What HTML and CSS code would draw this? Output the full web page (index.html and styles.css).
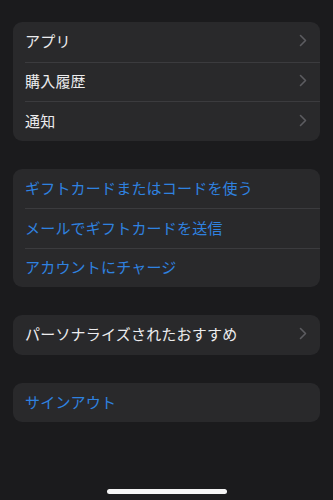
FILE: index.html
```html
<!DOCTYPE html>
<html lang="ja">
<head>
<meta charset="utf-8">
<link rel="stylesheet" href="styles.css">
</head>
<body>
<main class="page">
  <section class="card">
    <div class="row"><span class="label">アプリ</span><svg class="chev" viewBox="0 0 8 13"><path d="M1.5 1.5 L6.5 6.5 L1.5 11.5"/></svg></div>
    <div class="row"><span class="label">購入履歴</span><svg class="chev" viewBox="0 0 8 13"><path d="M1.5 1.5 L6.5 6.5 L1.5 11.5"/></svg></div>
    <div class="row"><span class="label">通知</span><svg class="chev" viewBox="0 0 8 13"><path d="M1.5 1.5 L6.5 6.5 L1.5 11.5"/></svg></div>
  </section>
  <section class="card">
    <div class="row"><span class="label link">ギフトカードまたはコードを使う</span></div>
    <div class="row"><span class="label link">メールでギフトカードを送信</span></div>
    <div class="row"><span class="label link">アカウントにチャージ</span></div>
  </section>
  <section class="card">
    <div class="row"><span class="label">パーソナライズされたおすすめ</span><svg class="chev" viewBox="0 0 8 13"><path d="M1.5 1.5 L6.5 6.5 L1.5 11.5"/></svg></div>
  </section>
  <section class="card">
    <div class="row"><span class="label link">サインアウト</span></div>
  </section>
</main>
<div class="home-indicator"></div>
</body>
</html>
```
FILE: styles.css
```css
html, body {
  margin: 0;
  padding: 0;
  background: #1b1b1d;
  height: 100%;
}
body {
  font-family: "Noto Sans CJK JP", "Noto Sans", sans-serif;
  color: #ececee;
  position: relative;
  overflow: hidden;
}
.page {
  display: flex;
  flex-direction: column;
  gap: 28px;
  padding: 22px 13px 0 13px;
}
.card {
  background: #29292b;
  border-radius: 9px;
  display: flex;
  flex-direction: column;
  padding-left: 12px;
}
.row {
  height: 39.5px;
  display: flex;
  align-items: center;
  justify-content: space-between;
  padding-right: 13px;
  padding-bottom: 2px;
  border-top: 0.5px solid #3b3b3e;
  box-sizing: border-box;
}
.row:first-child {
  border-top: none;
}
.label {
  font-size: 15px;
  letter-spacing: 0.2px;
  line-height: 1;
}
.link {
  color: #2f82e0;
}
.chev {
  width: 8px;
  height: 13px;
  fill: none;
  stroke: #5c5c60;
  stroke-width: 1.6;
  stroke-linecap: round;
  stroke-linejoin: round;
}
.home-indicator {
  position: absolute;
  left: 50%;
  bottom: 6px;
  width: 120px;
  height: 5px;
  margin-left: -60px;
  border-radius: 3px;
  background: #f4f4f4;
}
```
